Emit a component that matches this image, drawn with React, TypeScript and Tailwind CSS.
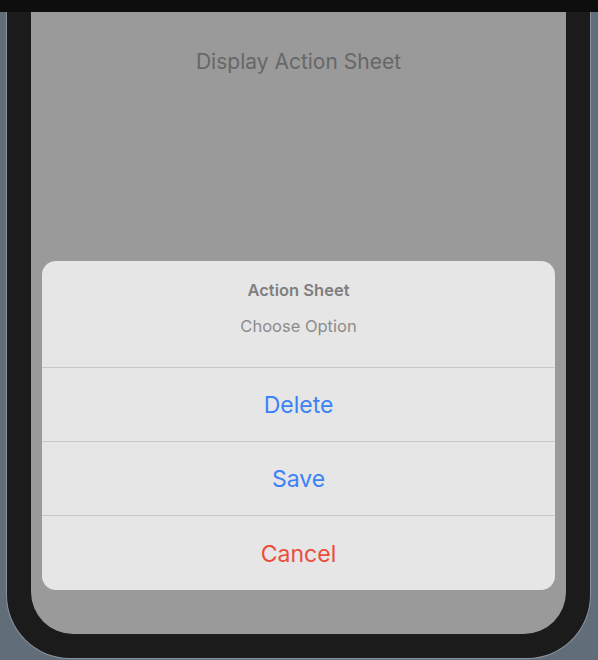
const ACTIONS = [
  { label: 'Delete', color: 'text-[#3b82f6]' },
  { label: 'Save', color: 'text-[#3b82f6]' },
  { label: 'Cancel', color: 'text-[#eb4d3d]' },
]

export default function App() {
  return (
    <div className="flex h-[660px] w-[598px] flex-col overflow-hidden bg-[#626d7a] font-['Inter',sans-serif]">
      <div className="h-[12px] shrink-0 bg-[#0e0e0e]" />
      <div className="mb-[1px] ml-[6px] mr-[7px] flex flex-1 flex-col rounded-b-[64px] border-x border-b border-[#8a939e] bg-[#1b1b1b] px-[24px] pb-[24px]">
        <div className="flex flex-1 flex-col rounded-b-[42px] bg-[#9a9a9a]">
          <div className="pt-[36px] text-center text-[21px] leading-[28px] text-[#676767]">
            Display Action Sheet
          </div>
          <div className="mx-[11px] mb-[44px] mt-auto overflow-hidden rounded-[14px] bg-[#e6e6e6]">
            <div className="flex h-[107px] flex-col items-center border-b border-[#c8c8c8] pt-[19px]">
              <div className="text-[16.5px] font-semibold leading-[20px] text-[#7f7f7f]">Action Sheet</div>
              <div className="mt-[16px] text-[16.5px] leading-[20px] text-[#8c8c8c]">Choose Option</div>
            </div>
            {ACTIONS.map((a, i) => (
              <div
                key={a.label}
                className={`flex h-[74px] items-center justify-center pt-[2px] text-[23px] ${a.color} ${
                  i < ACTIONS.length - 1 ? 'border-b border-[#c8c8c8]' : ''
                }`}
              >
                {a.label}
              </div>
            ))}
          </div>
        </div>
      </div>
    </div>
  )
}
